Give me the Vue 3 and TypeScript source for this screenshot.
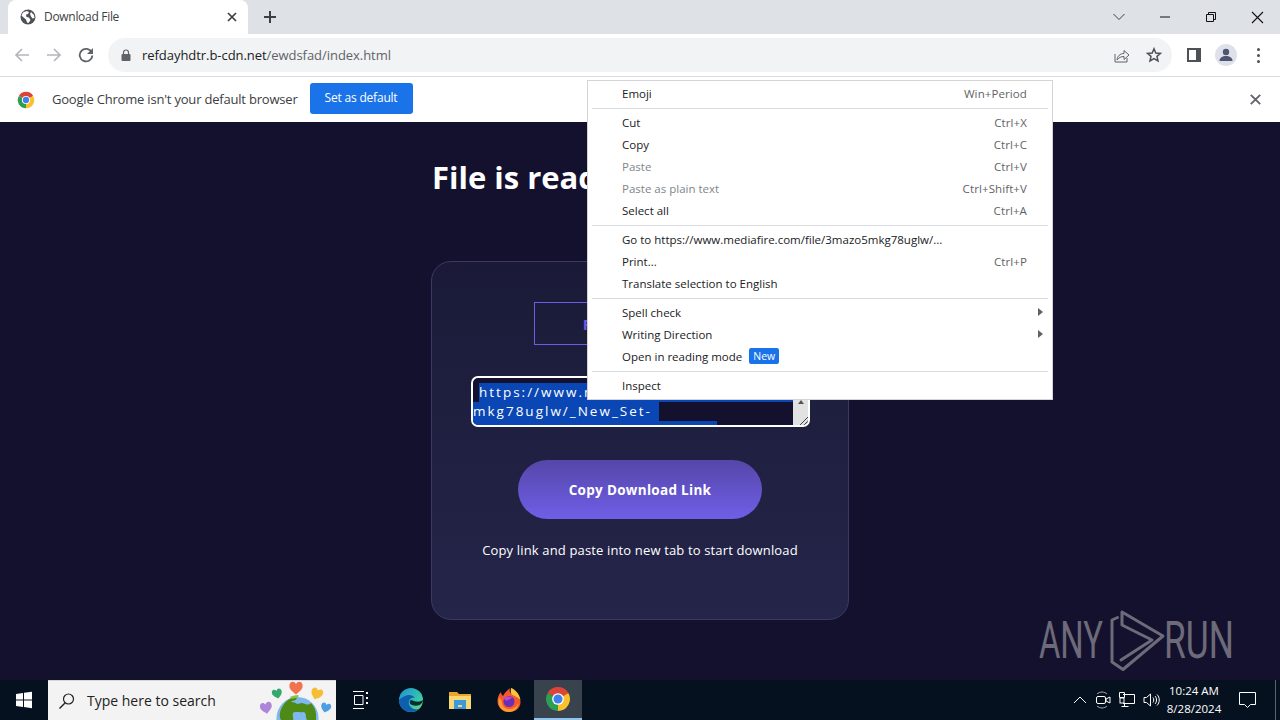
<script setup lang="ts">
interface MenuItem {
  label: string
  shortcut?: string
  disabled?: boolean
  submenu?: boolean
  badge?: string
}

const menuGroups: MenuItem[][] = [
  [{ label: 'Emoji', shortcut: 'Win+Period' }],
  [
    { label: 'Cut', shortcut: 'Ctrl+X' },
    { label: 'Copy', shortcut: 'Ctrl+C' },
    { label: 'Paste', shortcut: 'Ctrl+V', disabled: true },
    { label: 'Paste as plain text', shortcut: 'Ctrl+Shift+V', disabled: true },
    { label: 'Select all', shortcut: 'Ctrl+A' },
  ],
  [
    { label: 'Go to https://www.mediafire.com/file/3mazo5mkg78uglw/...' },
    { label: 'Print...', shortcut: 'Ctrl+P' },
    { label: 'Translate selection to English' },
  ],
  [
    { label: 'Spell check', submenu: true },
    { label: 'Writing Direction', submenu: true },
    { label: 'Open in reading mode', badge: 'New' },
  ],
  [{ label: 'Inspect' }],
]

const heart = 'M0-3C2-7 7-6 7-1 7 3 2 6 0 8-2 6-7 3-7-1-7-6-2-7 0-3Z'
const hearts = [
  { fill: '#35a86e', transform: 'translate(17 13) rotate(-15) scale(.72)' },
  { fill: '#f0724f', transform: 'translate(36 7) scale(.95)' },
  { fill: '#f6bd35', transform: 'translate(57 13) rotate(20) scale(.85)' },
  { fill: '#ad86d8', transform: 'translate(6 27) rotate(-10) scale(.85)' },
  { fill: '#4b9fe2', transform: 'translate(66 27) rotate(15) scale(.72)' },
]
</script>

<template>
  <div class="screen">
    <svg class="defs" width="0" height="0">
      <symbol id="chrome-logo" viewBox="0 0 24 24">
        <path d="M12 12 21.53 6.5A11 11 0 0 0 2.47 6.5Z" fill="#db4437" />
        <path d="M12 12 12 23A11 11 0 0 0 21.53 6.5Z" fill="#fbc02d" />
        <path d="M12 12 2.47 6.5A11 11 0 0 0 12 23Z" fill="#2e9e50" />
        <circle cx="12" cy="12" r="5.4" fill="#fff" />
        <circle cx="12" cy="12" r="4.2" fill="#3f82ee" />
      </symbol>
    </svg>

    <!-- tab strip -->
    <div class="tabstrip">
      <div class="tab">
        <svg class="tab-globe" width="16" height="16" viewBox="0 0 16 16">
          <circle cx="8" cy="8" r="7.5" fill="#4d5156" />
          <path d="M3 3.5 6.5 2 9 3 8 5 6 5.500 6.500 8 9 8.500 10.500 11 8.500 14 7 13.500 6 10.500 3 8 1.500 6.500ZM11 3l3 3 .5 3-2 .5L11 7.500 10 5Z" fill="#fff" />
        </svg>
        <span class="tab-title">Download File</span>
        <svg class="tab-close" width="10" height="10" viewBox="0 0 10 10">
          <path d="M1 1l8 8M9 1l-8 8" stroke="#3c4043" stroke-width="1.700" />
        </svg>
      </div>
      <svg class="new-tab" width="14" height="14" viewBox="0 0 14 14">
        <path d="M7 1v12M1 7h12" stroke="#3c4043" stroke-width="2" />
      </svg>
      <div class="window-controls">
        <span class="win-btn">
          <svg width="14" height="10" viewBox="0 0 14 10"><path d="M1.500 2 7 7.500 12.500 2" fill="none" stroke="#3c4043" /></svg>
        </span>
        <span class="win-btn">
          <svg width="12" height="2" viewBox="0 0 12 2"><path d="M1 1h10" stroke="#111" /></svg>
        </span>
        <span class="win-btn">
          <svg width="12" height="12" viewBox="0 0 12 12"><path d="M1.500 3.500h7v7h-7zM3.500 3.500v-2h7v7h-2" fill="none" stroke="#111" /></svg>
        </span>
        <span class="win-btn">
          <svg width="13" height="13" viewBox="0 0 13 13"><path d="M1 1l11 11M12 1 1 12" stroke="#111" stroke-width="1.100" /></svg>
        </span>
      </div>
    </div>

    <!-- toolbar -->
    <div class="toolbar">
      <span class="tool-btn">
        <svg width="16" height="16" viewBox="0 0 16 16"><path d="M15 8H2M8 2 2 8l6 6" fill="none" stroke="#b4b7bb" stroke-width="1.700" /></svg>
      </span>
      <span class="tool-btn">
        <svg width="16" height="16" viewBox="0 0 16 16"><path d="M1 8h13M8 2l6 6-6 6" fill="none" stroke="#b4b7bb" stroke-width="1.700" /></svg>
      </span>
      <span class="tool-btn">
        <svg width="16" height="16" viewBox="0 0 16 16"><path d="M13.600 5.200A6.300 6.300 0 1 0 14.300 8.500" fill="none" stroke="#5f6368" stroke-width="1.800" /><path d="M15 1v6H9Z" fill="#5f6368" /></svg>
      </span>
      <div class="omnibox">
        <svg class="lock" width="10" height="12" viewBox="0 0 10 12">
          <path d="M2.500 5V3.500a2.500 2.500 0 0 1 5 0V5" fill="none" stroke="#5f6368" stroke-width="1.200" />
          <rect x="0.500" y="5" width="9" height="7" rx="1" fill="#5f6368" />
        </svg>
        <span class="url"><span class="url-host">refdayhdtr.b-cdn.net</span>/ewdsfad/index.html</span>
        <svg class="omni-icon" width="16" height="16" viewBox="0 0 16 16">
          <path d="M1 7v8h12v-4" fill="none" stroke="#5f6368" />
          <path d="M3 13c.5-4 3-6.500 7-6.500V3.500l5 4.500-5 4.500v-3c-3 0-5 1-7 3.500Z" fill="#f1f3f4" stroke="#5f6368" />
        </svg>
        <svg class="omni-icon star" width="16" height="16" viewBox="0 0 16 16">
          <path d="M8 1.800 9.800 6l4.700.4-3.500 3 1 4.600L8 11.600 4 14l1-4.600-3.500-3L6.200 6Z" fill="none" stroke="#4d5156" stroke-width="1.500" />
        </svg>
      </div>
      <span class="panel-icon"></span>
      <span class="avatar">
        <svg width="16" height="16" viewBox="0 0 16 16">
          <circle cx="8" cy="5" r="3.200" fill="#4f5670" />
          <path d="M1.500 14c0-3.500 3-5 6.500-5s6.500 1.500 6.500 5Z" fill="#4f5670" />
        </svg>
      </span>
      <span class="dots"><i></i><i></i><i></i></span>
    </div>

    <!-- default browser infobar -->
    <div class="infobar">
      <svg class="info-logo" width="18" height="18"><use href="#chrome-logo" /></svg>
      <span class="info-text">Google Chrome isn't your default browser</span>
      <span class="info-btn">Set as default</span>
      <svg class="info-close" width="11" height="11" viewBox="0 0 11 11">
        <path d="M.8.8l9.400 9.400M10.200.8.800 10.200" stroke="#5f6368" stroke-width="1.800" />
      </svg>
    </div>

    <!-- page content -->
    <main class="page">
      <h1 class="headline">File is ready to download</h1>
      <section class="card">
        <div class="password">Password: 1234</div>
        <div class="link-box">
          <div class="link-lines">
            <span class="sel first">https://www.mediafire.com/file/3mazo5</span>
            <span class="sel second">mkg78uglw/_New_Set-</span>
            <span class="sel third"></span>
          </div>
          <div class="scrollbar">
            <span class="scroll-arrow"></span>
            <svg class="grip" width="12" height="12" viewBox="0 0 12 12">
              <path d="M11 3 3 11M11 7l-4 4" stroke="#444" />
            </svg>
          </div>
        </div>
        <button class="copy-btn" type="button">Copy Download Link</button>
        <p class="hint">Copy link and paste into new tab to start download</p>
      </section>
    </main>

    <!-- taskbar -->
    <footer class="taskbar">
      <span class="start">
        <svg width="18" height="18" viewBox="0 0 18 18">
          <path d="M1 3l7-1v6.500H1ZM9 1.800 17 .8v7.700H9ZM1 9.500h7V16l-7-1ZM9 9.500h8v7.700l-8-1.100Z" fill="#fff" />
        </svg>
      </span>
      <div class="search">
        <svg width="18" height="18" viewBox="0 0 18 18">
          <circle cx="10.500" cy="7" r="5" fill="none" stroke="#222" stroke-width="1.200" />
          <path d="M7 11 1.500 16.500" stroke="#222" stroke-width="1.400" />
        </svg>
        <span class="search-text">Type here to search</span>
        <svg class="search-art" width="76" height="40" viewBox="0 0 76 40">
          <circle cx="37.500" cy="38" r="21" fill="#7fb8ef" />
          <path d="M24 24c4-5 9-7 12-7 2 2-1 4-5 4 1 2 5 1 6 3l5-1c4 1 6 3 9 0 3 3 5 7 5 12v5H47c-2-3 0-6-3-8-5 1-9-1-11 1-1 3 1 5 0 7H21c-2-3-2-9 3-16Z" fill="#4f8a17" />
          <path d="M30 17c2-1 5-2 8-2 2 1-1 3-3 3-2 1-4 1-5-1Z" fill="#8cc63f" />
          <path v-for="h in hearts" :key="h.fill" :d="heart" :fill="h.fill" :transform="h.transform" />
        </svg>
      </div>
      <span class="task-slot taskview">
        <svg width="17" height="18" viewBox="0 0 17 18">
          <path d="M1 .5h11M1 17.500h11M2.500 4.500h8.500v9H2.500z" fill="none" stroke="#fff" />
          <path d="M14 1h2v2h-2zM14 6h2v2h-2zM14 11h2v2h-2z" fill="#fff" />
        </svg>
      </span>
      <span class="task-slot">
        <svg width="26" height="26" viewBox="0 0 26 26">
          <defs>
            <linearGradient id="edge-top" x1="0" y1="0" x2="1" y2="1">
              <stop offset="0" stop-color="#1f8fd6" />
              <stop offset="0.6" stop-color="#35c4ac" />
              <stop offset="1" stop-color="#6fe07a" />
            </linearGradient>
          </defs>
          <circle cx="13" cy="13" r="12" fill="url(#edge-top)" />
          <path d="M1 13c0 7 5 12 12 12 3 0 6-1 8-3-5 1-9-1-10-5-1-4 2-7 6-6-2-3-6-4-10-2-3 1-5 3-6 4Z" fill="#0f5fb0" />
          <path d="M13 13c-2 1-1.500 4 1 5 3 1 7 1 9-1 2-2 2-4 2-4-1 1-4 2-7 1.500-2-.3-3.500-1.500-5-1.500Z" fill="#06111f" opacity=".85" />
        </svg>
      </span>
      <span class="task-slot">
        <svg width="22" height="17" viewBox="0 0 22 17">
          <path d="M0 0h8l2 2h12v5H0Z" fill="#e7a82a" />
          <rect x="0" y="4" width="22" height="13" fill="#f8d775" />
          <rect x="5" y="8" width="12" height="9" fill="#3d98dc" />
          <rect x="9" y="13" width="4" height="2" fill="#f8d775" />
        </svg>
      </span>
      <span class="task-slot">
        <svg width="26" height="26" viewBox="0 0 26 26">
          <path d="M13 25C6 25 1.500 20 1.500 14 1.500 10 3 7 5 5c0 2 1 3 2 4 1-3 4-5 7-8-1 3 0 5 2 6 4 1 8.500 3 8.500 8 0 6-5 10-11.500 10Z" fill="#f4592e" />
          <path d="M15 1c4 1 8.500 6 9.500 12-3-3-6-4-8-5-2-1-2-4-1.500-7Z" fill="#ffc23c" />
          <path d="M3 11c2 1 3 2 3 4 0 4 3 7 7 7 4 0 8-2 9-6 1 5-4 9-9 9-7 0-12-6-10-14Z" fill="#ff9a2e" />
          <circle cx="13" cy="14.500" r="5.500" fill="#6a2fb5" />
          <path d="M8 11c2-2 6-2 8 0-1 1-3 1-4 2s-3 1-4-2Z" fill="#c44ac0" />
        </svg>
      </span>
      <span class="task-slot active">
        <svg width="26" height="26"><use href="#chrome-logo" /></svg>
      </span>
      <div class="tray">
        <svg width="14" height="8" viewBox="0 0 14 8"><path d="M1 7l6-6 6 6" fill="none" stroke="#fff" /></svg>
        <svg width="16" height="18" viewBox="0 0 16 18">
          <path d="M2 3c1-1 3-2 5-2s4 1 5 2M2 15c1 1 3 2 5 2s4-1 5-2" fill="none" stroke="#aaa" />
          <rect x="1.500" y="5.500" width="9" height="7" rx="1.500" fill="none" stroke="#fff" />
          <path d="M11 8l4-2v6l-4-2Z" fill="none" stroke="#fff" />
        </svg>
        <svg width="16" height="16" viewBox="0 0 16 16">
          <path d="M4 2.500h11.500v9H4M5.500 11.500v3M2.500 14.500h7M.5.500h5v5h-5z" fill="none" stroke="#fff" />
          <rect x="1" y="6" width="4" height="5" fill="none" stroke="#fff" />
        </svg>
        <svg width="17" height="14" viewBox="0 0 17 14">
          <path d="M1 4.500h2.500L7.500 1v12L3.500 9.500H1Z" fill="none" stroke="#fff" />
          <path d="M10 4.500c1 1.500 1 3.500 0 5M12 3c2 2 2 6 0 8M14 1.500c3 3 3 8 0 11" fill="none" stroke="#fff" />
        </svg>
      </div>
      <div class="clock">
        <span>10:24 AM</span>
        <span>8/28/2024</span>
      </div>
      <svg class="notify" width="17" height="16" viewBox="0 0 17 16">
        <path d="M.5.500h16v12h-5l-3 3-3-3h-5Z" fill="none" stroke="#fff" />
      </svg>
      <span class="show-desktop"></span>
    </footer>

    <!-- floats over the page -->
    <div class="context-menu">
      <template v-for="(group, i) in menuGroups" :key="i">
        <div v-if="i > 0" class="menu-sep"></div>
        <div
          v-for="item in group"
          :key="item.label"
          class="menu-item"
          :class="{ disabled: item.disabled }"
        >
          <span class="menu-label">{{ item.label }}</span>
          <span v-if="item.badge" class="menu-badge">{{ item.badge }}</span>
          <span v-if="item.shortcut" class="menu-shortcut">{{ item.shortcut }}</span>
          <span v-if="item.submenu" class="menu-arrow"></span>
        </div>
      </template>
    </div>

    <div class="watermark">
      <span class="mark-word any">ANY</span>
      <svg width="60" height="66" viewBox="0 0 60 66">
        <path d="M9.500 9.500 4 12V54L15 61.500 55 28 14 4V17L44 32 13 52" fill="none" stroke="#6d6a79" stroke-width="3" stroke-linejoin="round" stroke-linecap="round" />
      </svg>
      <span class="mark-word run">RUN</span>
    </div>
  </div>
</template>

<style>
html,
body {
  margin: 0;
  overflow: hidden;
}
</style>

<style scoped>
.screen {
  position: relative;
  width: 1280px;
  height: 720px;
  display: flex;
  flex-direction: column;
  overflow: hidden;
  font-family: "Open Sans", "Noto Sans", sans-serif;
  color: #202124;
}

.defs {
  position: absolute;
}

.tabstrip {
  height: 34px;
  flex: none;
  display: flex;
  align-items: flex-end;
  padding-left: 8px;
  background: #dee1e6;
}

.tab {
  width: 240px;
  height: 34px;
  box-sizing: border-box;
  display: flex;
  align-items: center;
  padding: 0 11px 0 12px;
  background: #fff;
  border-radius: 8px 8px 0 0;
}

.tab-title {
  flex: 1;
  margin: 0 0 2px 8px;
  font-size: 12px;
  letter-spacing: -0.3px;
  color: #3c4043;
}

.new-tab {
  margin: 0 0 10px 15px;
}

.window-controls {
  margin-left: auto;
  height: 34px;
  display: flex;
  padding-right: 0;
}

.win-btn {
  width: 46px;
  display: flex;
  align-items: center;
  justify-content: center;
}

.toolbar {
  height: 42px;
  flex: none;
  display: flex;
  align-items: center;
  padding-left: 6px;
  background: #fff;
  border-bottom: 1px solid #dadce0;
}

.tool-btn {
  width: 32px;
  display: flex;
  justify-content: center;
}

.omnibox {
  width: 1064px;
  height: 34px;
  box-sizing: border-box;
  display: flex;
  align-items: center;
  margin-left: 6px;
  padding: 0 10px 0 13px;
  background: #f1f3f4;
  border-radius: 17px;
}

.url {
  flex: 1;
  margin-left: 11px;
  font-size: 13px;
  letter-spacing: -0.05px;
  color: #5f6368;
}

.url-host {
  color: #202124;
}

.star {
  margin-left: 16px;
}

.panel-icon {
  width: 7px;
  height: 10px;
  margin-left: 15px;
  border: solid #4d5156;
  border-width: 2px 5px 2px 2px;
}

.avatar {
  width: 22px;
  height: 22px;
  margin-left: 14px;
  display: flex;
  align-items: center;
  justify-content: center;
  border-radius: 50%;
  background: #dfe1ea;
}

.dots {
  display: flex;
  flex-direction: column;
  gap: 3px;
  margin-left: 20px;
}

.dots i {
  width: 3px;
  height: 3px;
  border-radius: 50%;
  background: #4d5156;
}

.infobar {
  height: 45px;
  flex: none;
  box-sizing: border-box;
  display: flex;
  align-items: center;
  padding-left: 17px;
  background: #fff;
}

.info-text {
  margin: 0 0 2px 17px;
  font-size: 13px;
  letter-spacing: -0.2px;
  color: #3c4043;
}

.info-btn {
  width: 103px;
  height: 31px;
  margin: 0 0 2px 12px;
  display: flex;
  align-items: center;
  justify-content: center;
  padding-bottom: 2px;
  box-sizing: border-box;
  font-size: 12px;
  letter-spacing: -0.2px;
  color: #fff;
  background: #1a73e8;
  border-radius: 3px;
}

.info-close {
  margin-left: auto;
  margin-right: 19px;
}

.page {
  flex: 1;
  display: flex;
  flex-direction: column;
  align-items: center;
  min-height: 0;
  background: #14112e;
}

.headline {
  width: 416px;
  margin: 35px 0 64px;
  font-size: 31px;
  line-height: 40px;
  font-weight: 700;
  color: #fff;
}

.card {
  width: 418px;
  height: 359px;
  box-sizing: border-box;
  display: flex;
  flex-direction: column;
  align-items: center;
  padding-top: 40px;
  border: 1px solid #3b3963;
  border-radius: 20px;
  background: linear-gradient(#1a1a38, #25254a);
}

.password {
  width: 212px;
  height: 43px;
  box-sizing: border-box;
  display: flex;
  align-items: center;
  justify-content: center;
  border: 1px solid #6c5ce7;
  font-size: 15px;
  font-weight: 700;
  color: #6c5ce7;
}

.link-box {
  width: 339px;
  height: 51px;
  margin: 31px 0 0 1px;
  box-sizing: border-box;
  display: flex;
  overflow: hidden;
  border: 2px solid #fff;
  border-radius: 7px;
  background: #14112e;
}

.link-lines {
  flex: 1;
  min-width: 0;
  font-size: 13.500px;
  line-height: 19px;
  letter-spacing: 2px;
  color: #fff;
}

.sel {
  display: block;
  width: fit-content;
  height: 19px;
  background: #0a46b4;
  white-space: nowrap;
}

.first {
  width: 314px;
  margin: 5px 0 0 6px;
  overflow: hidden;
}

.second {
  width: 186px;
}

.third {
  width: 244px;
}

.scrollbar {
  position: relative;
  width: 15px;
  flex: none;
  background: #e2e2e2;
}

.scroll-arrow {
  position: absolute;
  top: 19px;
  left: 5px;
  border: 3px solid transparent;
  border-bottom: 4px solid #555;
}

.grip {
  position: absolute;
  right: -1px;
  bottom: -1px;
}

.copy-btn {
  width: 244px;
  height: 59px;
  margin-top: 33px;
  border: 0;
  border-radius: 30px;
  font-family: "Open Sans", sans-serif;
  font-size: 13.500px;
  font-weight: 700;
  letter-spacing: 0.3px;
  color: #fff;
  background: linear-gradient(#5546a8, #6f5fe8);
}

.hint {
  margin: 21px 0 0;
  font-size: 13px;
  line-height: 20px;
  letter-spacing: 0.15px;
  color: #fff;
}

.taskbar {
  height: 40px;
  flex: none;
  display: flex;
  align-items: center;
  background: #06111f;
  color: #fff;
}

.start {
  width: 48px;
  display: flex;
  justify-content: center;
}

.search {
  position: relative;
  width: 288px;
  height: 40px;
  box-sizing: border-box;
  display: flex;
  align-items: center;
  gap: 11px;
  padding-left: 10px;
  overflow: hidden;
  background: #f3f3f3;
  border: 1px solid #d6d6d6;
  border-width: 1px 0 0;
}

.search-text {
  font-size: 14px;
  color: #222;
}

.search-art {
  position: absolute;
  left: 212px;
  top: -1px;
}

.task-slot {
  width: 49px;
  height: 40px;
  box-sizing: border-box;
  display: flex;
  align-items: center;
  justify-content: center;
}

.taskview {
  width: 48px;
  margin-right: 2px;
}

.active {
  width: 48px;
  margin-left: 1px;
  background: #38434e;
  border-bottom: 2px solid #8ec4ee;
}

.tray {
  margin-left: auto;
  display: flex;
  align-items: center;
  gap: 8px;
}

.clock {
  width: 68px;
  display: flex;
  flex-direction: column;
  align-items: center;
  gap: 2px;
  font-size: 11.500px;
  line-height: 16px;
}

.notify {
  margin: 0 19px 0 11px;
}

.show-desktop {
  width: 1px;
  height: 40px;
  margin-right: 4px;
  background: #5b6570;
}

.context-menu {
  position: absolute;
  left: 587px;
  top: 80px;
  width: 466px;
  height: 320px;
  box-sizing: border-box;
  padding: 1px 0;
  background: #fff;
  border: 1px solid #d4d4d4;
}

.menu-item {
  position: relative;
  height: 22px;
  display: flex;
  align-items: center;
  padding: 0 25px 0 34px;
  font-size: 11.500px;
  color: #202124;
}

.menu-item.disabled {
  color: #80868b;
}

.menu-sep {
  height: 1px;
  margin: 4px 4px 2px;
  background: #dadce0;
}

.menu-badge {
  margin-left: 7px;
  padding: 0 4px;
  font-size: 10.500px;
  line-height: 16px;
  color: #fff;
  background: #1a73e8;
  border-radius: 2px;
}

.menu-shortcut {
  margin-left: auto;
  letter-spacing: 0.1px;
  color: #5f6368;
}

.menu-arrow {
  position: absolute;
  right: 9px;
  border: 4px solid transparent;
  border-right-width: 0;
  border-left: 5px solid #5f6368;
}

.watermark {
  position: absolute;
  left: 1039px;
  top: 608px;
  display: flex;
  align-items: center;
  height: 66px;
  color: #6d6a79;
}

.mark-word {
  width: 64px;
  font-family: "Roboto", sans-serif;
  font-size: 52px;
  line-height: 66px;
  transform-origin: left center;
  transform: scaleX(0.68);
}

.any {
  margin-right: 5px;
  transform: scaleX(0.63);
}

.run {
  margin-left: -4px;
}
</style>
